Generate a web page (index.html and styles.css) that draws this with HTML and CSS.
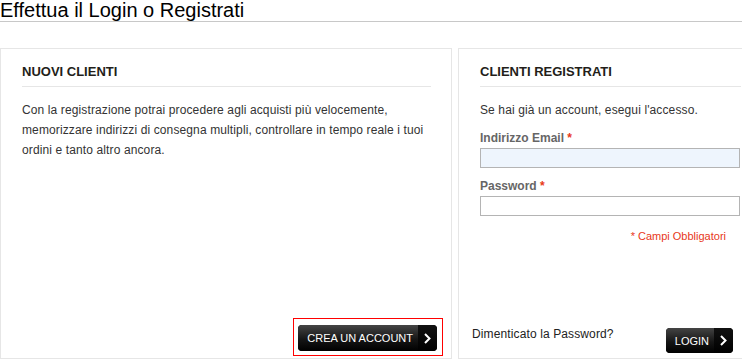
FILE: index.html
```html
<!DOCTYPE html>
<html lang="it">
<head>
  <meta charset="UTF-8" />
  <meta name="viewport" content="width=device-width, initial-scale=1" />
  <title>Effettua il Login o Registrati</title>
  <link rel="stylesheet" href="styles.css">
</head>
<body>
  <h1 class="page-title">Effettua il Login o Registrati</h1>

  <div class="account-login">
    <!-- Nuovi clienti -->
    <div class="box new-users">
      <div class="box-body">
        <h2 class="box-title">NUOVI CLIENTI</h2>
        <p class="box-text">Con la registrazione potrai procedere agli acquisti più velocemente, memorizzare indirizzi di consegna multipli, controllare in tempo reale i tuoi ordini e tanto altro ancora.</p>
      </div>
      <div class="box-foot foot-new">
        <div class="highlight">
          <button type="button" class="btn">
            <span class="btn-label">CREA UN ACCOUNT</span>
            <span class="btn-arrow">
              <svg width="7" height="11" viewBox="0 0 7 11"><polyline points="1,1 5.5,5.5 1,10" fill="none" stroke="#fff" stroke-width="2"/></svg>
            </span>
          </button>
        </div>
      </div>
    </div>

    <!-- Clienti registrati -->
    <div class="box registered-users">
      <div class="box-body">
        <h2 class="box-title">CLIENTI REGISTRATI</h2>
        <p class="box-text">Se hai già un account, esegui l'accesso.</p>
        <div class="field">
          <label for="email">Indirizzo Email <em>*</em></label>
          <input type="text" id="email" class="input-text filled" />
        </div>
        <div class="field">
          <label for="pass">Password <em>*</em></label>
          <input type="password" id="pass" class="input-text" />
        </div>
        <p class="required">* Campi Obbligatori</p>
      </div>
      <div class="box-foot foot-login">
        <a href="#" class="forgot">Dimenticato la Password?</a>
        <button type="button" class="btn btn-login">
          <span class="btn-label">LOGIN</span>
          <span class="btn-arrow">
            <svg width="7" height="11" viewBox="0 0 7 11"><polyline points="1,1 5.5,5.5 1,10" fill="none" stroke="#fff" stroke-width="2"/></svg>
          </span>
        </button>
      </div>
    </div>
  </div>
</body>
</html>
```

FILE: styles.css
```css
html, body {
  overflow: hidden;
}
body {
  margin: 0;
  width: 780px;
  font-family: 'Liberation Sans', Arial, sans-serif;
  font-size: 12px;
  letter-spacing: 0.12px;
  color: #333;
  background-color: #fff;
}
h1.page-title {
  margin: 0;
  font-size: 20px;
  font-weight: 400;
  line-height: 21px;
  letter-spacing: 0;
  color: #000;
  border-bottom: 1px solid #c8c8c8;
}
.account-login {
  display: flex;
  gap: 6px;
  margin-top: 26px;
}
.box {
  display: flex;
  flex-direction: column;
  height: 311px;
  box-sizing: border-box;
  border: 1px solid #e6e6e6;
}
.new-users {
  width: 452px;
}
.registered-users {
  width: 304px;
}
.box-body {
  padding: 14px 20px 0 21px;
}
h2.box-title {
  margin: 0;
  padding-bottom: 5px;
  font-size: 13px;
  line-height: 18px;
  font-weight: 700;
  letter-spacing: 0;
  color: #231e19;
  border-bottom: 1px solid #e6e6e6;
}
p.box-text {
  margin: 13px 0 0 0;
  line-height: 20px;
}
.field label {
  display: block;
  margin-top: 10px;
  line-height: 17px;
  font-weight: 700;
  letter-spacing: 0;
  color: #666;
}
.field label em {
  font-style: normal;
  color: #e8381a;
}
.input-text {
  display: block;
  width: 260px;
  height: 20px;
  margin: 1px 0 0 0;
  box-sizing: border-box;
  border: 1px solid #b4b4b4;
  background-color: #fff;
  font-family: inherit;
  font-size: 12px;
}
.input-text.filled {
  background-color: #eef5fd;
}
p.required {
  margin: 12px 0 0 0;
  padding-right: 15px;
  text-align: right;
  font-size: 11px;
  line-height: 16px;
  letter-spacing: 0;
  color: #e8381a;
}
.box-foot {
  margin-top: auto;
  display: flex;
}
.foot-new {
  justify-content: flex-end;
  padding: 0 8px 2px 0;
}
.highlight {
  border: 1px solid #f00;
  padding: 6px 5px 4px 4px;
}
.foot-login {
  align-items: flex-end;
  padding: 0 28px 5px 13px;
}
a.forgot {
  margin-bottom: 11px;
  line-height: 16px;
  color: #222;
  text-decoration: none;
}
.btn {
  display: inline-flex;
  height: 26px;
  padding: 0;
  border: 0;
  border-radius: 4px;
  overflow: hidden;
  font-family: inherit;
  font-size: 11px;
  color: #fff;
  cursor: pointer;
  background: #000;
}
.btn-login {
  height: 25px;
  margin-left: auto;
}
.btn-label {
  display: flex;
  align-items: center;
  padding: 0 5px 0 9px;
  background: linear-gradient(#444, #161616 55%, #000);
  letter-spacing: 0;
}
.btn-arrow {
  display: flex;
  align-items: center;
  justify-content: center;
  width: 19px;
  background: linear-gradient(#111, #000);
}
```
